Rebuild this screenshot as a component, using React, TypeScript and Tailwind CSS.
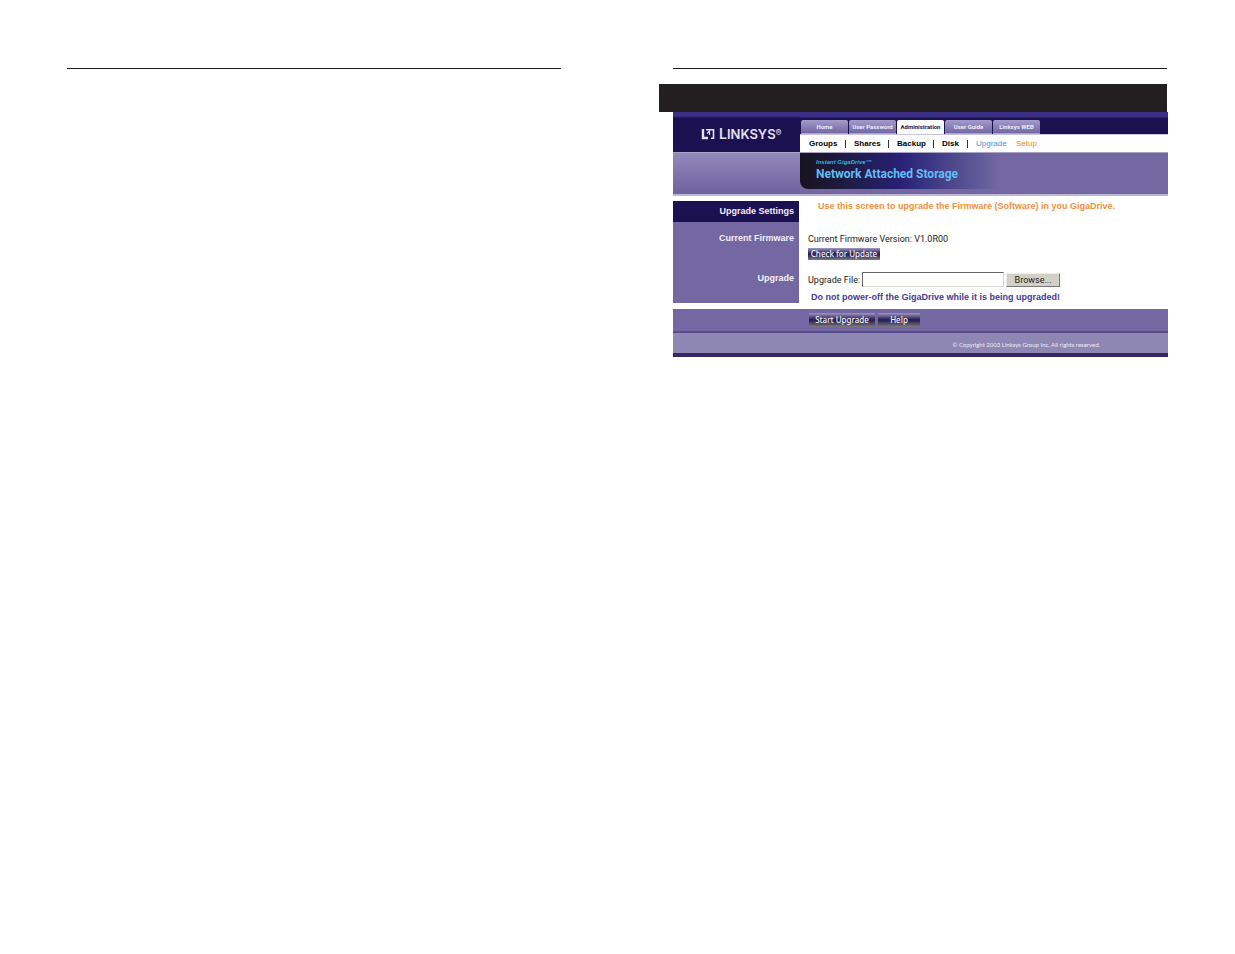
import type { ReactNode } from "react";

const tabs = ["Home", "User Password", "Administration", "User Guide", "Linksys WEB"];

const menu = [
  { label: "Groups", width: "w-[45px]", color: "text-black" },
  { label: "Shares", width: "w-[43px]", color: "text-black" },
  { label: "Backup", width: "w-[45px]", color: "text-black" },
  { label: "Disk", width: "w-[34px]", color: "text-black" },
  { label: "Upgrade", width: "w-[40px]", color: "text-[#3f92d6]" },
  { label: "Setup", width: "w-[30px]", color: "text-[#ee7f22]" },
];

function Logo() {
  return (
    <div className="flex items-center gap-1 text-[#e4e0f4]">
      <svg viewBox="0 0 14 12" className="h-3 w-3.5" fill="none" stroke="currentColor" aria-hidden>
        <path d="M2 1v9h5" strokeWidth="2.4" />
        <path d="M5 1.8h7.5v8.4H10" strokeWidth="1.6" />
        <path d="M6 5.5l2.5-2.5v4" strokeWidth="1.2" />
      </svg>
      <span className="flex items-baseline font-['Inter',sans-serif] leading-3 font-semibold">
        <span className="text-[14px]">L</span>
        <span className="text-[13px]">INKSYS</span>
        <span className="self-start text-[9px] leading-2.5 font-normal">®</span>
      </span>
    </div>
  );
}

function Tab({ label, active }: { label: string; active: boolean }) {
  return (
    <a
      href="#"
      className={
        "flex h-3.5 w-[47px] items-center justify-center rounded-t-xs text-[6px] leading-none font-bold whitespace-nowrap " +
        (active
          ? "bg-white text-[#1b1150]"
          : "border-b border-[#aaa3c8] bg-linear-to-b from-[#a49bcb] to-[#7368a4] text-[#eeebfa]")
      }
    >
      {label}
    </a>
  );
}

function DarkButton({ width, children }: { width: string; children: ReactNode }) {
  return (
    <button
      type="button"
      className={
        "bg-linear-to-b from-[#a29ac4] via-[#241a4e] via-50% to-[#807a80] text-center font-['Noto_Sans',sans-serif] text-[8px] leading-3 font-medium whitespace-nowrap text-[#f4f1fc] " +
        width
      }
    >
      {children}
    </button>
  );
}

function AdminScreen() {
  return (
    <div className="-mr-px grid grid-cols-[127px_1fr] bg-white font-['Liberation_Sans',Arial,sans-serif] text-[8px] leading-2.5">
      {/* top bar */}
      <div className="flex items-center border-b border-[#aaa3c8] bg-linear-to-b from-[#3c2f86] from-10% to-[#1b1150] to-15% pt-1 pl-7">
        <Logo />
      </div>
      <div className="border-b border-[#aaa3c8]">
        <div className="bg-linear-to-b from-[#3c2f86] from-20% to-[#1b1150] to-30% pt-2">
          <nav className="flex gap-px pl-px font-['Roboto',sans-serif]">
            {tabs.map((t) => (
              <Tab key={t} label={t} active={t === "Administration"} />
            ))}
          </nav>
        </div>
        <nav className="flex h-[18px] items-center border-t border-[#c9c4de] pl-[9px] font-bold">
          {menu.map((m, i) => (
            <span key={m.label} className={"flex " + m.width}>
              <a href="#" className={m.color + (i > 3 ? " font-normal" : "")}>
                {m.label}
              </a>
              {i < 4 && (
                <span className="ml-auto flex w-[9px] items-center">
                  <span className="h-2 w-px bg-[#333]" />
                </span>
              )}
            </span>
          ))}
        </nav>
      </div>

      {/* product banner */}
      <div className="h-[43px] border-b-2 border-[#bdb7d6] bg-linear-to-b from-[#9389bb] to-[#6d629e]" />
      <div className="border-b-2 border-[#bdb7d6] bg-[#7368a2]">
        <div className="h-9 w-[200px] rounded-bl-lg bg-linear-to-r from-[#17131f] via-[#282075] via-50% to-[#7368a2] pt-1 pl-4">
          <p className="text-[6px] leading-2.5 font-bold text-[#35b5dc] italic">Instant GigaDrive™</p>
          <h1 className="font-['Roboto',sans-serif] text-[12px] leading-3.5 font-bold whitespace-nowrap text-[#62bdf5]">
            Network Attached Storage
          </h1>
        </div>
      </div>

      {/* settings */}
      <div className="mt-[5px] mr-px h-[102px] bg-[#7368a2] pr-[5px] text-right text-[9px] font-bold text-[#f1effa]">
        <h2 className="-mr-[5px] h-[21px] bg-[#1b1150] pr-[5px] leading-[21px]">Upgrade Settings</h2>
        <p className="mt-[11px]">Current Firmware</p>
        <p className="mt-[30px]">Upgrade</p>
      </div>
      <div className="pl-2 font-['Roboto',sans-serif] text-[9px]">
        <p className="mt-[5px] pl-2.5 font-['Liberation_Sans',sans-serif] font-bold whitespace-nowrap text-[#ed8f3e]">
          Use this screen to upgrade the Firmware (Software) in you GigaDrive.
        </p>
        <p className="mt-[23px] mb-1 text-[#222]">Current Firmware Version: V1.0R00</p>
        <div className="flex">
          <DarkButton width="w-[72px]">Check for Update</DarkButton>
        </div>
        <div className="mt-3 flex items-center text-[#222]">
          <label htmlFor="file">Upgrade File:</label>
          <input
            id="file"
            type="text"
            className="ml-0.5 h-[15px] w-[142px] border border-[#d8d5d0] border-t-[#666] border-l-[#666] bg-white px-1"
          />
          <button
            type="button"
            className="ml-0.5 h-3.5 w-[54px] border border-[#eee] border-r-[#777] border-b-[#777] bg-[#d4d0c8]"
          >
            Browse...
          </button>
        </div>
        <p className="mt-[5px] pl-[3px] font-['Liberation_Sans',sans-serif] font-bold whitespace-nowrap text-[#463a91]">
          Do not power-off the GigaDrive while it is being upgraded!
        </p>
      </div>

      {/* actions and footer */}
      <div className="col-span-2 mt-1.5 flex h-6 items-center gap-[3px] border-b-2 border-[#584b8b] bg-[#7368a2] pl-[136px]">
        <DarkButton width="w-[66px] h-3.5">Start Upgrade</DarkButton>
        <DarkButton width="w-[42px] h-3.5">Help</DarkButton>
      </div>
      <footer className="col-span-2 h-6 border-b-4 border-[#352862] bg-[#8e86b3] pr-[68px] text-right font-['Lato',sans-serif] text-[6px] leading-6 text-[#eeebf8]">
        © Copyright 2003 Linksys Group Inc. All rights reserved.
      </footer>
    </div>
  );
}

export default function App() {
  return (
    <main className="grid min-h-screen grid-cols-2 gap-28 bg-white pt-[68px] pr-[68px] pl-[67px]">
      <section className="border-t border-[#231f20]" />
      <section className="border-t border-[#231f20]">
        <div className="mt-[15px] -ml-3.5 h-7 bg-[#231f20]" />
        <AdminScreen />
      </section>
    </main>
  );
}
